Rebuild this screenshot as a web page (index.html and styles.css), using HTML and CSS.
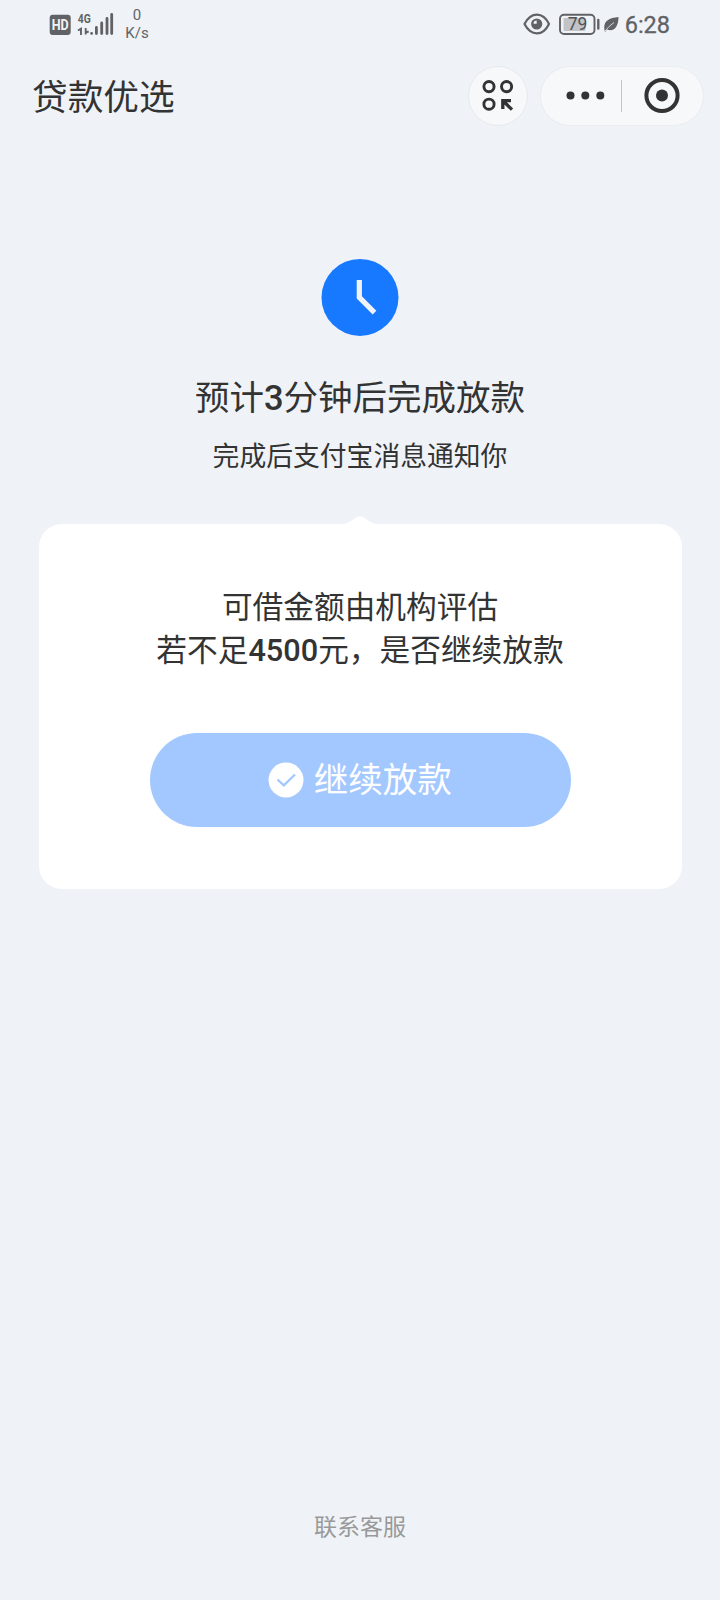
FILE: index.html
```html
<!DOCTYPE html>
<html lang="zh-CN">
<head>
<meta charset="utf-8">
<title>贷款优选</title>
<link rel="stylesheet" href="styles.css">
</head>
<body>
<div class="screen">
  <div class="status">
    <svg class="status-left" width="74" height="48" viewBox="0 0 74 48">
      <rect x="-.3" y="14.700" width="21" height="20.300" rx="3" fill="#606265"/>
      <text x="10.200" y="30" class="hd" text-anchor="middle" textLength="17" lengthAdjust="spacingAndGlyphs">HD</text>
      <text x="27.700" y="23" class="net" textLength="13" lengthAdjust="spacingAndGlyphs">4G</text>
      <path d="M28 30.500l3-1.800V35M35.700 28v6.500M35.700 32.500l3-1" fill="none" stroke="#606265" stroke-width="1.900"/>
      <path d="M41.600 33.400h.01M46.400 27.500v6M51.700 23v10.500M57 18.500v15M61.700 14.500v19" stroke="#606265" stroke-width="2.800" stroke-linecap="round"/>
    </svg>
    <div class="speed"><span>0</span><span>K/s</span></div>
    <div class="status-right">
      <svg width="96" height="48" viewBox="0 0 96 48">
        <path d="M1.500 24C8 11.500 20 11.500 26 24C20 36.500 8 36.500 1.500 24Z" fill="none" stroke="#606265" stroke-width="2.200" stroke-linejoin="round"/>
        <circle cx="13.700" cy="24" r="5.600" fill="#606265"/>
        <path d="M13.700 20.500v3.200h-3.200a3.200 3.200 0 0 1 3.200-3.200z" fill="#eff3f8"/>
        <rect x="37" y="14.700" width="34.500" height="19.300" rx="4" fill="none" stroke="#606265" stroke-width="1.900"/>
        <rect x="40.500" y="18" width="22" height="13" rx="1" fill="#c1c3c6"/>
        <text x="54.500" y="30" class="battery" text-anchor="middle">79</text>
        <path d="M75.300 20v8.500" stroke="#606265" stroke-width="2.400" stroke-linecap="round"/>
        <path d="M82 32C79 20 87 18 95.500 17C95.500 28 90 32 84 29.500L82 32Z" fill="#606265"/>
        <path d="M82 31Q86 26 91 22.500" fill="none" stroke="#eff3f8" stroke-width=".8"/>
      </svg>
      <span class="time">6:28</span>
    </div>
  </div>

  <header class="nav">
    <h1 class="nav-title">贷款优选</h1>
    <div class="round-button">
      <svg width="32" height="32" viewBox="0 0 32 32" fill="none" stroke="#333" stroke-width="2.900">
        <circle cx="7" cy="6.600" r="5.100"/><circle cx="24.600" cy="6.600" r="5.100"/><circle cx="7" cy="24.200" r="5.100"/>
        <path d="M20.800 29V20.600H29M21 20.800L30 29.600" stroke-width="3.300"/>
      </svg>
    </div>
    <div class="capsule">
      <svg width="162" height="58" viewBox="0 0 162 58">
        <g fill="#333"><circle cx="29.500" cy="28.500" r="4"/><circle cx="44.300" cy="28.500" r="4"/><circle cx="59.300" cy="28.500" r="4"/><circle cx="121" cy="28.500" r="6"/></g>
        <path d="M80.500 13v32" stroke="#c3c5c8"/>
        <circle cx="121" cy="28.500" r="15.600" fill="none" stroke="#333" stroke-width="4"/>
      </svg>
    </div>
  </header>

  <main class="result">
    <svg class="clock" width="78" height="78" viewBox="0 0 78 78">
      <circle cx="39" cy="39.400" r="38.500" fill="#1779ff"/>
      <path d="M38.300 22V39.400L53.500 54.600" fill="none" stroke="#eff4fb" stroke-width="5.200"/>
    </svg>
    <h2 class="headline">预计<b>3</b>分钟后完成放款</h2>
    <p class="subline">完成后支付宝消息通知你</p>
    <svg class="notch" width="36" height="8" viewBox="0 0 36 8"><path d="M0 8C8 8 13 .2 18 .2S28 8 36 8Z" fill="#fff"/></svg>
    <section class="card">
      <p class="question">可借金额由机构评估<br>若不足<b>4500</b>元，是否继续放款</p>
      <button class="confirm">
        <svg width="36" height="36" viewBox="0 0 36 36">
          <circle cx="18" cy="18" r="17.500" fill="#fff"/>
          <path d="M9.500 17.500L15.800 23.300L27 12.500" fill="none" stroke="#a2c8ff" stroke-width="2.300"/>
        </svg>
        <span>继续放款</span>
      </button>
    </section>
  </main>
  <footer class="service">联系客服</footer>
</div>
</body>
</html>
```
FILE: styles.css
```css
* { box-sizing: border-box; }
body, h1, h2, p { margin: 0; }
body {
  background: #eff3f8;
  color: #333;
  font-family: Roboto, "Noto Sans CJK SC", sans-serif;
}
.screen {
  width: 720px;
  height: 1600px;
  display: flex;
  flex-direction: column;
}
.status {
  height: 48px;
  padding: 0 50px;
  display: flex;
  color: #606265;
}
.status svg { display: block; overflow: visible; }
.hd { font: bold 14px Roboto, sans-serif; fill: #eff3f8; }
.net { font: bold 13px Roboto, sans-serif; fill: #606265; }
.battery { font: 400 17.5px Roboto, sans-serif; fill: #505255; }
.speed {
  width: 26px;
  padding-top: 6px;
  display: flex;
  flex-direction: column;
  align-items: center;
  font-size: 15px;
  line-height: 18px;
}
.status-right {
  margin-left: auto;
  display: flex;
  gap: 5.5px;
}
.time { font-size: 23.5px; line-height: 50px; font-weight: 400; -webkit-text-stroke: .3px #606265; }
.nav {
  height: 96px;
  padding: 0 16px 0 32px;
  display: flex;
  align-items: center;
}
.nav-title {
  flex: 1;
  padding-top: 3px;
  font-size: 35.7px;
  line-height: 52px;
  font-weight: 400;
}
.round-button {
  width: 60px;
  height: 60px;
  border: 1px solid #e7e9ec;
  border-radius: 50%;
  background: #f7f8fa;
  display: flex;
  align-items: center;
  justify-content: center;
}
.capsule {
  width: 164px;
  height: 60px;
  margin-left: 12px;
  border: 1px solid #eaecef;
  border-radius: 30px;
  background: #f7f8fa;
}
.capsule svg { display: block; }
.result {
  padding: 114px 38.5px 0;
  display: flex;
  flex-direction: column;
  align-items: center;
}
.clock { display: block; }
.headline {
  margin-top: 37px;
  font-size: 34.5px;
  line-height: 50px;
  font-weight: 400;
}
.headline b, .question b { font-weight: 500; }
.subline {
  margin-top: 14px;
  font-size: 26.8px;
  line-height: 40px;
}
.notch { display: block; margin-top: 39px; }
.card {
  width: 100%;
  height: 365px;
  padding-top: 62px;
  border-radius: 23px;
  background: #fff;
  display: flex;
  flex-direction: column;
  align-items: center;
}
.question {
  font-size: 30.7px;
  line-height: 43px;
  text-align: center;
}
.confirm {
  width: 421px;
  height: 94px;
  margin-top: 61.2px;
  padding: 0;
  border: 0;
  border-radius: 47px;
  background: #a2c8ff;
  color: #fff;
  font-family: inherit;
  font-size: 34.5px;
  line-height: 50px;
  display: flex;
  align-items: center;
  justify-content: center;
  gap: 9.5px;
}
.service {
  margin-top: auto;
  padding-bottom: 55px;
  color: #999;
  font-size: 23px;
  line-height: 34px;
  text-align: center;
}
```
